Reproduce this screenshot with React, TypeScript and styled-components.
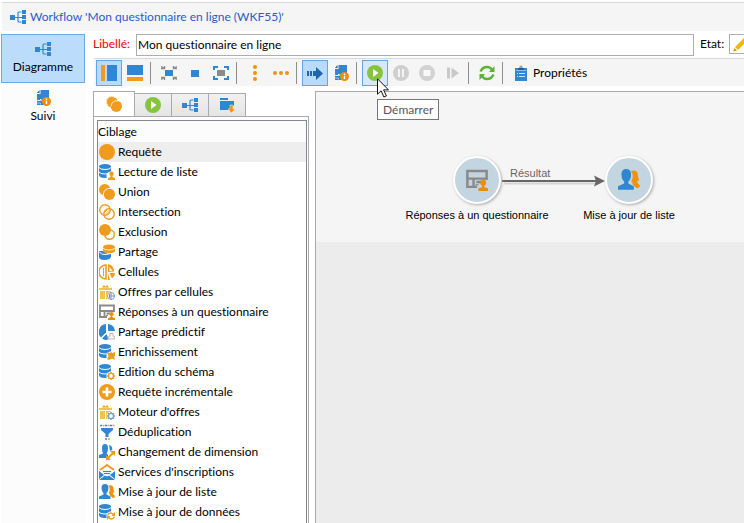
import React from "react";
import styled, { createGlobalStyle } from "styled-components";

const BLUE = "#2f86d2";
const ORANGE = "#ef9c1e";
const GREY = "#8a8a8a";
const UI_FONT = 'Lato, "Open Sans", sans-serif';

const GlobalStyle = createGlobalStyle`
  *, *::before, *::after { box-sizing: border-box; }
  body {
    margin: 0;
    background: #fff;
    color: #000;
    font: 12px/16px ${UI_FONT};
    font-variant-ligatures: none;
    overflow: hidden;
  }
  button, input { font: inherit; font-variant-ligatures: none; color: inherit; }
  svg { display: block; flex: none; }
`;

/* ---------- icons ---------- */

const Svg = ({ children, size = 16 }: { children: React.ReactNode; size?: number }) => (
  <svg width={size} height={size} viewBox="0 0 16 16" fill="none" aria-hidden="true">
    {children}
  </svg>
);

const shapes = {
  workflow: (
    <>
      <path d="M0 6h5v5H0zM12 1h4v4h-4zM12 6h4v4h-4zM12 11h4v4h-4z" fill={BLUE} />
      <path d="M5 8.500h7M11.500 3H9q-1 0-1 1v8q0 1 1 1h2.500" stroke={BLUE} strokeWidth="1.200" />
    </>
  ),
  journal: (
    <>
      <path d="M5.500 0H14v8l-6 7H2V4h3.500z" fill={BLUE} />
      <path d="M2 3l2.500-3v3z" fill="#1f5f9f" />
      <path d="M1 9.500q1.500 1.500 4.500 1V9L8 11.500" stroke="#fff" strokeWidth="1" />
      <path d="M5.500 14.500v-1.500H2" stroke="#d5e7f8" strokeWidth=".7" />
      <circle cx="11.500" cy="11.500" r="4.500" fill="#f08c00" />
      <path d="M11.500 10.800v3.200M11.500 8.600v1.300" stroke="#fff" strokeWidth="1.400" />
    </>
  ),
  paneLeft: (
    <>
      <path d="M0 0h4v16H0z" fill={ORANGE} />
      <path d="M6 0h10v16H6z" fill={BLUE} />
    </>
  ),
  paneBottom: (
    <>
      <path d="M0 0h16v10H0z" fill={BLUE} />
      <path d="M0 12h16v4H0z" fill={ORANGE} />
    </>
  ),
  fit: (
    <>
      <path d="M4 5h8v6H4z" fill={BLUE} />
      <path d="M0 1.500l3.500 2M3.500 1v2.500H0M16 1.500l-3.500 2M12.500 1v2.500H16M0 14.500l3.500-2M3.500 15v-2.500H0M16 14.500l-3.500-2M12.500 15v-2.500H16" stroke={GREY} strokeWidth="1.400" />
    </>
  ),
  actualSize: <path d="M4 5h8v7H4z" fill={BLUE} />,
  fullscreen: (
    <>
      <path d="M4 5h8v6H4z" fill={GREY} />
      <path d="M1 5V2h4M11 2h4v3M15 11v3h-4M5 14H1v-3" stroke={BLUE} strokeWidth="2" />
    </>
  ),
  dotsV: (
    <g fill="#f0920a">
      <circle cx="8" cy="2" r="2" />
      <circle cx="8" cy="8" r="2" />
      <circle cx="8" cy="14" r="2" />
    </g>
  ),
  dotsH: (
    <g fill="#f0920a">
      <circle cx="2" cy="8" r="2" />
      <circle cx="8" cy="8" r="2" />
      <circle cx="14" cy="8" r="2" />
    </g>
  ),
  progress: <path d="M0 6h2v5H0zM3 6h2v5H3zM6 6h3V2l7 6.500L9 15v-4H6z" fill="#1f66ae" />,
  play: (
    <>
      <circle cx="8" cy="8" r="8" fill="#86c440" />
      <path d="M6 4l5.500 4L6 12z" fill="#fff" />
    </>
  ),
  pause: (
    <>
      <circle cx="8" cy="8" r="8" fill="#cfcfcf" />
      <path d="M5 4h2v8H5zM9 4h2v8H9z" fill="#f5f5f5" />
    </>
  ),
  stop: (
    <>
      <circle cx="8" cy="8" r="8" fill="#d2d2d2" />
      <path d="M4.500 5h7v6h-7z" fill="#f8f8f8" />
    </>
  ),
  step: <path d="M2 2.500h3v11H2zM6.500 2.500L14 8l-7.500 5.500z" fill="#c9c9c9" />,
  refresh: (
    <>
      <path d="M1.500 6.500Q3.500 2 8 2q3.500 0 5 3M14.500 9.500Q12.500 14 8 14q-3.500 0-5-3" stroke="#5cb236" strokeWidth="2.400" />
      <path d="M15.500 1v6H10zM.5 15V9H6z" fill="#5cb236" />
    </>
  ),
  clipboard: (
    <>
      <path d="M2 3h12v13H2z" fill={BLUE} />
      <path d="M5 5V3h1.500a1.500 2.500 0 013 0H11v2z" fill="#215f9e" />
      <circle cx="8" cy="2" r=".8" fill="#fff" />
      <path d="M3 5.500h10" stroke="#8fbfea" />
      <path d="M4 8.500h1M6 8.500h6M4 11.500h1M6 11.500h6" stroke="#cfe3f6" />
    </>
  ),
  pencil: (
    <>
      <path d="M3 11L12 2l3 3-9 9z" fill="#f3b70c" />
      <path d="M2.500 12l2.500 2.500-4 1z" fill="#d79a00" />
    </>
  ),
  folder: (
    <>
      <path d="M1 1h8v2H1zM1 4h14v5h-3v4H1z" fill={BLUE} />
      <path d="M11 8h3v4h2l-3.500 4L9 12h2z" fill="#f0920a" stroke="#eee" strokeWidth=".5" />
    </>
  ),
  disc: <circle cx="8" cy="8" r="8" fill={ORANGE} />,
  union: (
    <>
      <circle cx="5.700" cy="5.700" r="5.700" fill={ORANGE} />
      <circle cx="10.300" cy="10.300" r="5.700" fill={ORANGE} />
      <path d="M4.500 11.500a6 6 0 017-7" stroke="#fff" strokeWidth="1" />
    </>
  ),
  tabUnion: (
    <>
      <circle cx="5.700" cy="5.700" r="5.700" fill={ORANGE} />
      <circle cx="10.300" cy="10.300" r="5.700" fill={ORANGE} />
      <path d="M2 9.500A5 5 0 019.500 2M5 10.500a5.500 5.500 0 017-5.500" stroke="#fff" strokeWidth=".8" />
    </>
  ),
  intersection: (
    <g stroke={ORANGE} strokeWidth="1.400">
      <circle cx="6" cy="6" r="5.200" />
      <circle cx="10" cy="10" r="5.200" />
      <path d="M5.500 8.500l3-3M6.500 10l4-4M7.500 11l3-3" strokeWidth=".8" />
    </g>
  ),
  exclusion: (
    <>
      <circle cx="10.500" cy="10.500" r="4.800" fill="#fff" stroke={ORANGE} strokeWidth="1.400" />
      <circle cx="6" cy="6" r="6" fill={ORANGE} />
    </>
  ),
  share: (
    <>
      <path d="M0 7v6q0 3 5.500 3T12 13V9q-5 2-7-2z" fill={BLUE} />
      <path d="M0 7.500q2 3.500 6 3t6-1" stroke="#fff" />
      <path d="M4 3v4q0 2 6 2t6-2V3z" fill={ORANGE} />
      <ellipse cx="10" cy="2.800" rx="5.800" ry="2.300" fill={ORANGE} />
      <path d="M4 4q1 2 6 2t6-2" stroke="#fff" strokeWidth=".8" />
    </>
  ),
  cells: (
    <>
      <path d="M7 1a7 7 0 000 14z" stroke={ORANGE} strokeWidth="1.600" />
      <path d="M4.500 4v8" stroke={ORANGE} />
      <path d="M9 0a8 8 0 016 7.500L9 8zM9 9l2 7H9zM10.500 9H16a7 7 0 01-3 5.500z" fill={ORANGE} />
      <path d="M10.500 3l3 3.500-3 .5z" fill="#fff" />
    </>
  ),
  form: (
    <>
      <path d="M15 8V1.500H1V13h7M1 7h14M5.500 7v6M7.500 9.500H11" stroke={GREY} strokeWidth="1.800" />
      <path d="M7 11.500h2" stroke={GREY} />
      <circle cx="12.500" cy="10" r="2.100" fill="#f08c00" />
      <path d="M11.700 11h1.600v2.200l2.700.8v2H9v-2l2.700-.8z" fill="#f08c00" />
    </>
  ),
  pie: (
    <>
      <path d="M7 0a8 8 0 00-5 13.500l5-5z" fill={BLUE} />
      <path d="M9 0a8 8 0 017 7H9zM3 14.500L7.500 10l2 5q-3 2-6.500-.5z" fill={BLUE} />
      <path d="M9 15v-2l2-1V9.500h3V12l2 1v2z" fill="#f6f6f6" stroke="#aaa" strokeWidth=".8" />
    </>
  ),
  plus: (
    <>
      <circle cx="8" cy="8" r="8" fill={ORANGE} />
      <path d="M8 3.500v9M3.500 8h9" stroke="#fff" strokeWidth="2.600" />
    </>
  ),
  dedupe: (
    <>
      <path d="M2 4h12v2l-4.500 4v3h-3v-3L2 6z" fill={BLUE} />
      <path d="M1 1.500h2M6 1.500h2M11 1.500h2M6 15h2" stroke={BLUE} strokeWidth="1.600" />
      <path d="M3.500 1.500h2M8.500 1.500h2M13.500 1.500h2M9 15h2" stroke={ORANGE} strokeWidth="1.600" />
    </>
  ),
  dimension: (
    <>
      <path d="M3 4q0-4 3-4t3 4-1.500 5L9 11v3H0v-3l4-1.500Q3 8 3 4z" fill={BLUE} />
      <path d="M10 1q4 1 3 5l-2 1z" fill={BLUE} />
      <path d="M8 15l7-7" stroke={ORANGE} strokeWidth="2.200" />
      <path d="M11 7h5v5zM7 11v5h5z" fill={ORANGE} />
    </>
  ),
  service: (
    <>
      <path d="M1 6l7-5 7 5" stroke={ORANGE} strokeWidth="2" />
      <path d="M3 6h10v5H3z" fill="#eaf3fb" />
      <path d="M4 7.500h8M5 9.500h6" stroke={BLUE} />
      <path d="M0 7l5 4-5 4zM16 7l-5 4 5 4zM0 16l6-4.500 2 1 2-1L16 16z" fill={BLUE} />
    </>
  ),
  people: (
    <>
      <path d="M9.500 1.500Q14.500 0 14.500 5q0 1.500 1 3l-1.500.8V10l2 2-.5 1.500-2 .5L10.500 11V9.500l-1-.5q2.500-3.500 0-7.500z" fill="#f0920a" />
      <path d="M2.500 4q0-4 3.500-4t3.500 4q0 3.500-2 5v1.500l4 2V15H0v-2.500l4.500-2V9q-2-1.500-2-5z" fill={BLUE} />
    </>
  ),
} as const;

const Database = ({ children }: { children: React.ReactNode }) => (
  <>
    <path d="M0 2v9q0 3 6 3t6-3V2z" fill={BLUE} />
    <ellipse cx="6" cy="2.500" rx="6" ry="2.500" fill={BLUE} />
    <path d="M0 3.500q1 2 6 2t6-2M0 8q1 2 6 2t6-2" stroke="#fff" strokeWidth="1" />
    <circle cx="12" cy="12" r="4.600" fill="#fff" />
    {children}
  </>
);

const Offer = ({ children }: { children: React.ReactNode }) => (
  <>
    <path d="M0 4h13v2H0zM1 7h5v8H1zM7 7h5v8H7z" fill="#f3c24c" />
    <path d="M3 3.500L5 1l1.500 2L8 1l2 2.500z" fill={ORANGE} />
    <circle cx="12" cy="12" r="4.300" fill="#fff" />
    {children}
  </>
);

const gear = (color: string) => (
  <>
    <circle cx="12" cy="12" r="2.600" stroke={color} strokeWidth="1.400" />
    <path d="M12 8v1.500M12 14.500V16M8 12h1.500M14.500 12H16M9.200 9.200l1 1M13.800 13.800l1 1M9.200 14.800l1-1M13.800 10.200l1-1" stroke={color} strokeWidth="1.400" />
  </>
);

const composed = {
  readList: (
    <Database>
      <circle cx="12.500" cy="9.700" r="2.200" fill={ORANGE} />
      <path d="M11.500 10h2v3l2.500 1v2H9v-2l2.500-1z" fill={ORANGE} />
    </Database>
  ),
  enrich: (
    <Database>
      <path d="M8 8l2.500 1L12 8l1.500 1L16 8v4l-1 1 1 3-3-1.500L10 16l-2-1 1.500-2.500z" fill={ORANGE} />
    </Database>
  ),
  schema: <Database>{gear(ORANGE)}</Database>,
  updateData: (
    <Database>
      <path d="M8.500 11.500Q10 8.500 12 9t2.500 2M15.500 12.500Q14 15.500 12 15t-2.500-2" stroke={ORANGE} strokeWidth="1.400" />
      <path d="M16 8v4h-3.500zM8 16v-4h3.500z" fill={ORANGE} />
    </Database>
  ),
  offerCells: (
    <Offer>
      <circle cx="12" cy="12" r="3.500" stroke="#7f9fcb" />
      <path d="M12 8.500v7M10.500 10v4M12 12h3.500" stroke="#5f8bc4" />
    </Offer>
  ),
  offerEngine: <Offer>{gear("#7f9fcb")}</Offer>,
};

const icons = { ...shapes, ...composed };
type IconName = keyof typeof icons;
const Icon = ({ name, size }: { name: IconName; size?: number }) => <Svg size={size}>{icons[name]}</Svg>;

/* ---------- layout ---------- */

const Page = styled.div`
  display: flex;
  flex-direction: column;
  height: 100vh;
  padding: 2px 0 0 1px;
`;

const TitleBar = styled.header`
  display: flex;
  align-items: center;
  gap: 4px;
  height: 29px;
  padding-left: 8px;
  margin-left: 1px;
  border-top: 1px solid #d8d8d8;
  background: #f5f5f5;
`;

const Title = styled.h1`
  margin: 0;
  font: inherit;
  font-variant-ligatures: none;
  color: #2a5cc8;
`;

const Body = styled.div`
  display: flex;
  flex: 1;
  gap: 8px;
  min-height: 0;
  padding-top: 3px;
`;

const SideNav = styled.nav`
  flex: 0 0 84px;
  background: #fcfcfc;
`;

const NavButton = styled.button<{ $active?: boolean }>`
  display: flex;
  flex-direction: column;
  align-items: center;
  gap: 2px;
  width: 100%;
  height: 49px;
  padding: 6px 0 0;
  margin: 0;
  border: 1px solid ${(p) => (p.$active ? "#6aaaea" : "transparent")};
  background: ${(p) => (p.$active ? "#bbdcfb" : "transparent")};
`;

const Main = styled.main`
  display: flex;
  flex: 1;
  flex-direction: column;
  min-width: 0;
`;

const FieldRow = styled.div`
  display: flex;
  align-items: flex-start;
  height: 24px;
`;

const FieldLabel = styled.label<{ $required?: boolean }>`
  flex: none;
  width: ${(p) => (p.$required ? "43px" : "29px")};
  padding-top: 2px;
  color: ${(p) => (p.$required ? "#ff0000" : "#000")};
`;

const TextInput = styled.input`
  flex: 1;
  min-width: 0;
  height: 22px;
  padding: 0 1px 2px;
  margin-right: 6px;
  border: 1px solid #abadb3;
  border-radius: 0;
  outline: 0;
  background: #fff;
`;

const StateButton = styled.button`
  flex: 0 0 15px;
  height: 20px;
  padding: 1px 2px;
  border: 1px solid #abadb3;
  border-right: 0;
  overflow: hidden;
  background: #fff;
`;

const Toolbar = styled.div`
  display: flex;
  align-items: center;
  height: 28px;
  padding-left: 2px;
  margin: 0 0 5px 1px;
  border-top: 1px solid #d8d8d8;
  background: #f5f5f5;
`;

const ToolButton = styled.button<{ $state?: "on" | "hover" }>`
  display: flex;
  flex: none;
  align-items: center;
  justify-content: center;
  gap: 4px;
  min-width: 26px;
  height: 26px;
  padding: 0 4px;
  border: 1px solid ${(p) => (p.$state ? "#64a5e7" : "transparent")};
  background: ${(p) => (p.$state === "on" ? "#b9dafa" : p.$state === "hover" ? "#d6e8f9" : "transparent")};
`;

const ToolWrap = styled.div`
  position: relative;
`;

const Separator = styled.span`
  flex: none;
  width: 1px;
  height: 22px;
  margin: 0 5px 0 2px;
  background: #8e8e8e;
`;

const Tooltip = styled.div`
  position: absolute;
  top: 39px;
  left: 15px;
  z-index: 2;
  height: 21px;
  padding: 2px 5px;
  border: 1px solid #767676;
  background: #fff;
  color: #575757;
`;

const Pointer = styled.svg`
  position: absolute;
  top: 18px;
  left: 15px;
  z-index: 3;
`;

const Workspace = styled.div`
  display: flex;
  flex: 1;
  gap: 6px;
  min-height: 0;
`;

const Palette = styled.section`
  display: flex;
  flex: 0 0 216px;
  flex-direction: column;
`;

const TabRow = styled.div`
  display: flex;
  align-items: flex-end;
  flex: none;
  height: 25px;
`;

const Tab = styled.button<{ $active?: boolean }>`
  display: flex;
  align-items: center;
  justify-content: center;
  padding: 0 ${(p) => (p.$active ? "12px" : "10px")};
  height: ${(p) => (p.$active ? "26px" : "24px")};
  margin: 0 0 -1px ${(p) => (p.$active ? "0" : "-1px")};
  border: 1px solid #aaa;
  border-bottom-color: ${(p) => (p.$active ? "#fff" : "#aaa")};
  background: ${(p) => (p.$active ? "#fff" : "linear-gradient(#f1f1f1, #e4e4e4)")};
`;

const TabPanel = styled.div`
  flex: 1;
  min-height: 0;
  padding: 3px 1px 0 3px;
  border: solid #aaa;
  border-width: 1px 1px 0;
`;

const ListBox = styled.div`
  height: 100%;
  border: solid #828790;
  border-width: 1px 1px 0;
  overflow: hidden;
  background: #fff;
`;

const ListHeading = styled.h2`
  height: 21px;
  margin: 0;
  padding: 3px 0 0;
  font: inherit;
  background: #fcfcfc;
`;

const Activities = styled.ul`
  margin: 0;
  padding: 0;
  list-style: none;
`;

const Activity = styled.button<{ $selected?: boolean }>`
  display: flex;
  align-items: center;
  gap: 3px;
  width: 100%;
  height: 20px;
  padding: 0 1px;
  border: 0;
  text-align: left;
  white-space: nowrap;
  background: ${(p) => (p.$selected ? "#eee" : "transparent")};
`;

const Canvas = styled.section`
  position: relative;
  flex: 1;
  min-width: 0;
  border: solid #aaa;
  border-width: 1px 0 0 1px;
  background: #ececec;
  font: 11px/14px "Liberation Sans", Arial, sans-serif;
`;

const Sheet = styled.div`
  height: 150px;
  background: #f5f5f5;
`;

const Node = styled.div<{ $x: number }>`
  position: absolute;
  top: 64px;
  left: ${(p) => p.$x}px;
  display: flex;
  flex-direction: column;
  align-items: center;
  gap: 4px;
  width: 150px;
  white-space: nowrap;
`;

const NodeDisc = styled.div`
  display: flex;
  align-items: center;
  justify-content: center;
  width: 48px;
  height: 48px;
  border: 2px solid #fff;
  border-radius: 50%;
  background: #c3d5e1;
  box-shadow: 1px 1px 3px #aaa;
`;

const Link = styled.svg`
  position: absolute;
  top: 82px;
  left: 186px;
`;

const LinkLabel = styled.span`
  position: absolute;
  top: 74px;
  left: 194px;
  color: #666;
`;

const tools: (null | { icon: IconName; label: string; state?: "on" })[] = [
  { icon: "paneLeft", label: "Palette", state: "on" },
  { icon: "paneBottom", label: "Journal" },
  null,
  { icon: "fit", label: "Ajuster" },
  { icon: "actualSize", label: "Taille réelle" },
  { icon: "fullscreen", label: "Plein écran" },
  null,
  { icon: "dotsV", label: "Alignement vertical" },
  { icon: "dotsH", label: "Alignement horizontal" },
  null,
  { icon: "progress", label: "Progression", state: "on" },
  { icon: "journal", label: "Suivi" },
  null,
];

const activities: [IconName, string][] = [
  ["disc", "Requête"],
  ["readList", "Lecture de liste"],
  ["union", "Union"],
  ["intersection", "Intersection"],
  ["exclusion", "Exclusion"],
  ["share", "Partage"],
  ["cells", "Cellules"],
  ["offerCells", "Offres par cellules"],
  ["form", "Réponses à un questionnaire"],
  ["pie", "Partage prédictif"],
  ["enrich", "Enrichissement"],
  ["schema", "Edition du schéma"],
  ["plus", "Requête incrémentale"],
  ["offerEngine", "Moteur d'offres"],
  ["dedupe", "Déduplication"],
  ["dimension", "Changement de dimension"],
  ["service", "Services d'inscriptions"],
  ["people", "Mise à jour de liste"],
  ["updateData", "Mise à jour de données"],
];

export default function App() {
  return (
    <>
      <GlobalStyle />
      <Page>
        <TitleBar>
          <Icon name="workflow" />
          <Title>Workflow 'Mon questionnaire en ligne (WKF55)'</Title>
        </TitleBar>
        <Body>
          <SideNav>
            <NavButton $active>
              <Icon name="workflow" />
              Diagramme
            </NavButton>
            <NavButton>
              <Icon name="journal" />
              Suivi
            </NavButton>
          </SideNav>
          <Main>
            <FieldRow>
              <FieldLabel htmlFor="label" $required>Libellé:</FieldLabel>
              <TextInput id="label" defaultValue="Mon questionnaire en ligne" />
              <FieldLabel htmlFor="state">Etat:</FieldLabel>
              <StateButton id="state" aria-haspopup="listbox">
                <Icon name="pencil" />
              </StateButton>
            </FieldRow>
            <Toolbar role="toolbar">
              {tools.map((tool, i) =>
                tool ? (
                  <ToolButton key={i} $state={tool.state} aria-label={tool.label}>
                    <Icon name={tool.icon} />
                  </ToolButton>
                ) : (
                  <Separator key={i} />
                ),
              )}
              <ToolWrap>
                <ToolButton $state="hover" aria-describedby="start-tip" aria-label="Démarrer">
                  <Icon name="play" />
                </ToolButton>
                <Pointer width="13" height="20" viewBox="0 0 13 20" aria-hidden="true">
                  <path d="M.5.8v15.400l3.600-3.400 2.800 6.200 2.500-1.100-2.800-6h4.900z" fill="#fff" stroke="#111" />
                </Pointer>
                <Tooltip id="start-tip" role="tooltip">Démarrer</Tooltip>
              </ToolWrap>
              <ToolButton aria-label="Pause" disabled><Icon name="pause" /></ToolButton>
              <ToolButton aria-label="Arrêter" disabled><Icon name="stop" /></ToolButton>
              <ToolButton aria-label="Redémarrer" disabled><Icon name="step" /></ToolButton>
              <Separator />
              <ToolButton aria-label="Actualiser"><Icon name="refresh" /></ToolButton>
              <Separator />
              <ToolButton>
                <Icon name="clipboard" />
                Propriétés
              </ToolButton>
            </Toolbar>
            <Workspace>
              <Palette>
                <TabRow role="tablist">
                  <Tab $active role="tab" aria-selected="true" aria-label="Ciblage"><Icon name="tabUnion" /></Tab>
                  <Tab role="tab" aria-label="Contrôle de flux"><Icon name="play" /></Tab>
                  <Tab role="tab" aria-label="Actions"><Icon name="workflow" /></Tab>
                  <Tab role="tab" aria-label="Evénements"><Icon name="folder" /></Tab>
                </TabRow>
                <TabPanel role="tabpanel">
                  <ListBox>
                    <ListHeading>Ciblage</ListHeading>
                    <Activities>
                      {activities.map(([icon, name], i) => (
                        <li key={name}>
                          <Activity $selected={i === 0}>
                            <Icon name={icon} />
                            {name}
                          </Activity>
                        </li>
                      ))}
                    </Activities>
                  </ListBox>
                </TabPanel>
              </Palette>
              <Canvas>
                <Sheet />
                <Link width="104" height="14" viewBox="0 0 104 14" aria-hidden="true">
                  <path d="M2 9.500h94" stroke="#d5d5d5" strokeWidth="2" />
                  <path d="M0 7h96" stroke="#666" strokeWidth="2" />
                  <path d="M92 1.500L103 7l-11 5.500L94 7z" fill="#666" />
                </Link>
                <LinkLabel>Résultat</LinkLabel>
                <Node $x={86}>
                  <NodeDisc><Icon name="form" size={22} /></NodeDisc>
                  Réponses à un questionnaire
                </Node>
                <Node $x={238}>
                  <NodeDisc><Icon name="people" size={22} /></NodeDisc>
                  Mise à jour de liste
                </Node>
              </Canvas>
            </Workspace>
          </Main>
        </Body>
      </Page>
    </>
  );
}
